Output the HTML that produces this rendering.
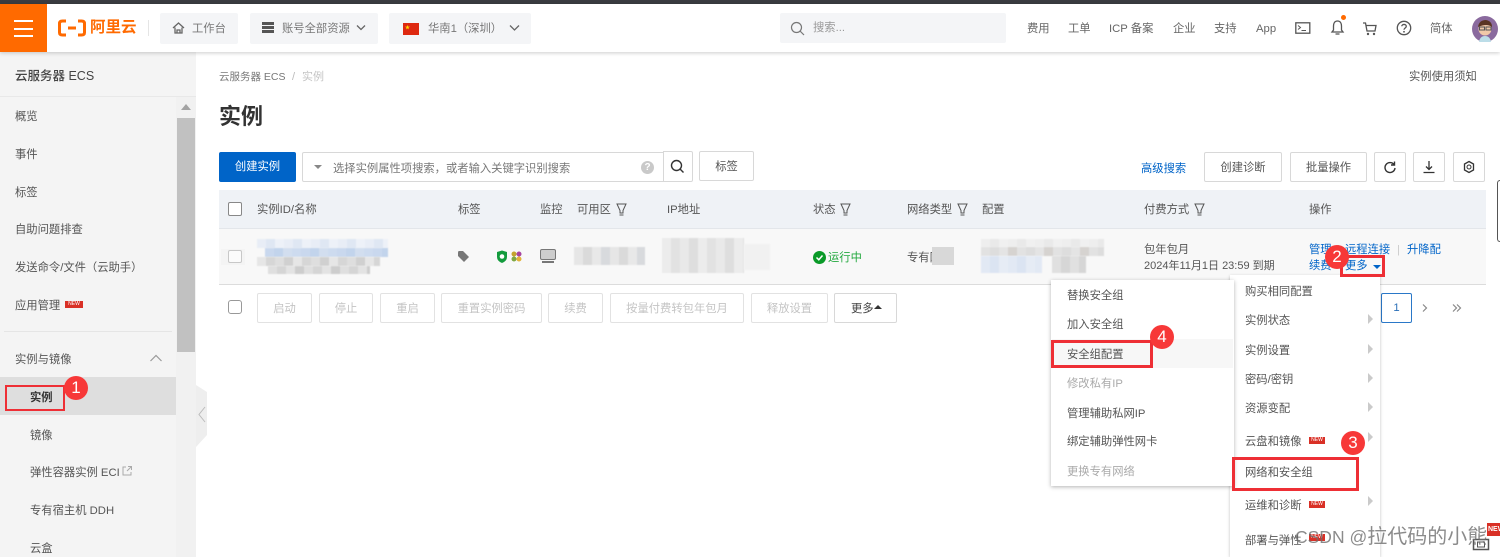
<!DOCTYPE html>
<html lang="zh"><head><meta charset="utf-8"><title>实例</title>
<style>
html,body{margin:0;padding:0;width:1500px;height:557px;overflow:hidden;background:#fff}
body{font-family:"Liberation Sans","Noto Sans CJK SC",sans-serif;font-size:11.300px;color:#555}
#w{position:absolute;left:0;top:0;width:1500px;height:557px;overflow:hidden;filter:blur(.3px)}
.t{position:absolute;line-height:16px;white-space:nowrap;height:16px;margin-top:1px}
.b{position:absolute;box-sizing:border-box}
.btn{position:absolute;box-sizing:border-box;border:1px solid #d8d8d8;border-radius:2px;background:#fff;text-align:center;color:#555;height:30px;line-height:30px;white-space:nowrap}
.dis{color:#c4c4c4;border-color:#e2e2e2;height:30px}
.blue{color:#0064c8}
.n{position:absolute;width:24px;height:24px;border-radius:50%;background:#f73838;color:#fff;font-size:17px;line-height:24px;text-align:center;z-index:9}
.red{position:absolute;box-sizing:border-box;border:3px solid #ee2f35;z-index:8}
.new{position:absolute;width:16px;height:7px;background:#d93026;color:#fff;font-size:5px;line-height:7px;text-align:center}
.arr{position:absolute;width:0;height:0;border-left:5px solid #cacaca;border-top:5px solid transparent;border-bottom:5px solid transparent}
.bl{position:absolute;filter:blur(.5px)}
svg{position:absolute}
</style></head><body><div id="w">
<!-- top bar -->
<div class="b" style="left:0;top:0;width:1500px;height:4px;background:#3a3b40"></div>
<div class="b" style="left:0;top:4px;width:1500px;height:48px;background:#fff;box-shadow:0 1px 4px rgba(0,0,0,.2);z-index:3"></div>
<div style="position:absolute;inset:0;z-index:4">
<div class="b" style="left:0;top:4px;width:47px;height:48px;background:#ff6a00"></div>
<div class="b" style="left:14px;top:20px;width:19px;height:2px;background:#fff"></div>
<div class="b" style="left:14px;top:28px;width:19px;height:2px;background:#fff"></div>
<div class="b" style="left:14px;top:35px;width:19px;height:2px;background:#fff"></div>
<svg style="left:58px;top:19px" width="28" height="18" viewBox="0 0 28 18"><path d="M8 2H4.500Q1.500 2 1.500 4.500V13.500Q1.500 16 4.500 16H8M20 2H23.500Q26.500 2 26.500 4.500V13.500Q26.500 16 23.500 16H20M10 9H18" fill="none" stroke="#ff6a00" stroke-width="3"/></svg>
<span class="t" style="left:90px;top:17px;font-size:15.500px;font-weight:700;color:#ff6a00;line-height:20px;height:20px">阿里云</span>
<div class="b" style="left:148px;top:20px;width:1px;height:16px;background:#e5e5e5"></div>
<div class="b" style="left:160px;top:13px;width:78px;height:31px;background:#f4f5f7;border-radius:2px"></div>
<svg style="left:172px;top:21px" width="13" height="14" viewBox="0 0 13 14"><path d="M1 7L6.500 2L12 7M3 6.500V12H10V6.500M5 12V9H8V12" fill="none" stroke="#666" stroke-width="1.300"/></svg>
<span class="t" style="left:192px;top:20px;color:#777">工作台</span>
<div class="b" style="left:250px;top:13px;width:128px;height:31px;background:#f4f5f7;border-radius:2px"></div>
<div class="b" style="left:262px;top:22px;width:12px;height:3px;background:#555"></div><div class="b" style="left:262px;top:26px;width:12px;height:3px;background:#555"></div><div class="b" style="left:262px;top:30px;width:12px;height:3px;background:#555"></div>
<span class="t" style="left:282px;top:20px;color:#777">账号全部资源</span>
<svg style="left:356px;top:24px" width="10" height="8" viewBox="0 0 10 8"><path d="M1 1.500L5 5.500L9 1.500" fill="none" stroke="#666" stroke-width="1.300"/></svg>
<div class="b" style="left:389px;top:13px;width:142px;height:31px;background:#f4f5f7;border-radius:2px"></div>
<div class="b" style="left:403px;top:23px;width:16px;height:12px;background:#de2910"></div>
<span class="t" style="left:405px;top:23px;font-size:5px;color:#ffde00;height:8px;line-height:8px">★</span>
<span class="t" style="left:428px;top:20px;color:#777">华南1（深圳）</span>
<svg style="left:509px;top:24px" width="11" height="8" viewBox="0 0 11 8"><path d="M1 1.500L5.500 6L10 1.500" fill="none" stroke="#666" stroke-width="1.300"/></svg>
<div class="b" style="left:780px;top:13px;width:226px;height:30px;background:#f4f5f7;border-radius:2px"></div>
<svg style="left:790px;top:21px" width="15" height="15" viewBox="0 0 15 15"><circle cx="6.500" cy="6.500" r="5" fill="none" stroke="#777" stroke-width="1.200"/><path d="M10 10L14 14" stroke="#777" stroke-width="1.200"/></svg>
<span class="t" style="left:813px;top:19px;color:#999">搜索...</span>
<span class="t" style="left:1027px;top:20px;color:#666">费用</span>
<span class="t" style="left:1068px;top:20px;color:#666">工单</span>
<span class="t" style="left:1109px;top:20px;color:#666">ICP 备案</span>
<span class="t" style="left:1173px;top:20px;color:#666">企业</span>
<span class="t" style="left:1214px;top:20px;color:#666">支持</span>
<span class="t" style="left:1256px;top:20px;color:#666">App</span>
<svg style="left:1295px;top:22px" width="16" height="12" viewBox="0 0 16 12"><rect x=".8" y=".8" width="14" height="10.400" fill="none" stroke="#555" stroke-width="1.300"/><path d="M3 3.500L5.500 5.500L3 7.500M6.500 8.500H11" fill="none" stroke="#555"/></svg>
<svg style="left:1330px;top:19px" width="15" height="17" viewBox="0 0 15 17"><path d="M7.500 2C4.500 2 3.500 4.500 3.500 7V11L2 13H13L11.500 11V7C11.500 4.500 10.500 2 7.500 2ZM5.500 15H9.500" fill="none" stroke="#555" stroke-width="1.300"/></svg>
<div class="b" style="left:1341px;top:15px;width:5px;height:5px;border-radius:50%;background:#ff6a00"></div>
<svg style="left:1362px;top:21px" width="16" height="15" viewBox="0 0 16 15"><path d="M1 2H3.500L5 10H13L14 4.500H4" fill="none" stroke="#555" stroke-width="1.300"/><circle cx="6" cy="13" r="1.200" fill="#555"/><circle cx="12" cy="13" r="1.200" fill="#555"/></svg>
<svg style="left:1396px;top:20px" width="16" height="16" viewBox="0 0 16 16"><circle cx="8" cy="8" r="6.700" fill="none" stroke="#555" stroke-width="1.300"/><path d="M5.800 6.300C5.800 3.800 10.300 3.800 10.300 6.300C10.300 8 8 8 8 9.800" fill="none" stroke="#555" stroke-width="1.300"/><circle cx="8" cy="11.800" r=".9" fill="#555"/></svg>
<span class="t" style="left:1430px;top:20px;color:#666">简体</span>
<svg style="left:1472px;top:16px" width="26" height="26" viewBox="0 0 26 26"><circle cx="13" cy="13" r="13" fill="#8a6a9e"/><circle cx="13" cy="13" r="6.500" fill="#f0c8a8"/><path d="M6 11Q7 4 14 4Q20 5 20 11Q15 7 6 11Z" fill="#5a3524"/><rect x="7.500" y="11" width="5" height="3" fill="none" stroke="#555"/><rect x="14" y="11" width="5" height="3" fill="none" stroke="#555"/><path d="M7 26Q8 20 13 20Q18 20 19 26Z" fill="#bcdde8"/></svg>
</div>

<!-- sidebar -->
<div class="b" style="left:0;top:52px;width:176px;height:505px;background:#f4f4f4"></div>
<div class="b" style="left:176px;top:97px;width:20px;height:460px;background:#f1f1f1"></div>
<div class="b" style="left:177px;top:118px;width:18px;height:234px;background:#c1c1c1"></div>
<div class="b" style="left:181px;top:104px;border-left:5px solid transparent;border-right:5px solid transparent;border-bottom:6px solid #a3a3a3"></div>
<div class="b" style="left:176px;top:52px;width:20px;height:45px;background:#f4f4f4"></div>
<span class="t" style="left:15px;top:67px;font-size:12.500px;color:#444;font-weight:500">云服务器 ECS</span>
<div class="b" style="left:0;top:96px;width:196px;height:1px;background:#e8e8e8"></div>
<span class="t" style="left:15px;top:108px">概览</span>
<span class="t" style="left:15px;top:146px">事件</span>
<span class="t" style="left:15px;top:184px">标签</span>
<span class="t" style="left:15px;top:221px">自助问题排查</span>
<span class="t" style="left:15px;top:259px">发送命令/文件（云助手）</span>
<span class="t" style="left:15px;top:297px">应用管理</span>
<div class="new" style="left:65px;top:301px;width:18px">NEW</div>
<div class="b" style="left:4px;top:331px;width:168px;height:1px;background:#e5e5e5"></div>
<span class="t" style="left:15px;top:351px">实例与镜像</span>
<svg style="left:149px;top:353px" width="14" height="10" viewBox="0 0 14 10"><path d="M1.500 8L7 2.500L12.500 8" fill="none" stroke="#999" stroke-width="1.200"/></svg>
<div class="b" style="left:0;top:377px;width:176px;height:38px;background:#dedede"></div>
<span class="t" style="left:30px;top:389px;color:#333;font-weight:700">实例</span>
<span class="t" style="left:30px;top:427px">镜像</span>
<span class="t" style="left:30px;top:464px">弹性容器实例 ECI</span>
<svg style="left:121px;top:465px" width="12" height="12" viewBox="0 0 12 12"><path d="M5 2H2V10H10V7M7 1.500H10.500V5M10.500 1.500L6 6" fill="none" stroke="#aaa"/></svg>
<span class="t" style="left:30px;top:502px">专有宿主机 DDH</span>
<span class="t" style="left:30px;top:540px">云盒</span>
<svg style="left:196px;top:385px" width="12" height="62" viewBox="0 0 12 62"><path d="M0 0L11 7V50L0 62Z" fill="#eee"/><path d="M9 22L3 29.500L9 37" fill="none" stroke="#bbb"/></svg>

<!-- header -->
<span class="t" style="left:219px;top:68px;font-size:10.500px;color:#777">云服务器 ECS</span>
<span class="t" style="left:292px;top:68px;font-size:11px;color:#bbb">/</span>
<span class="t" style="left:302px;top:68px;font-size:11px;color:#c4c4c4">实例</span>
<span class="t" style="left:1409px;top:68px;font-size:11.300px;color:#555">实例使用须知</span>
<span class="t" style="left:219px;top:100px;font-size:22px;font-weight:700;color:#333;line-height:32px;height:32px">实例</span>

<!-- toolbar -->
<div class="b" style="left:219px;top:152px;width:77px;height:30px;background:#0064c8;border-radius:2px;color:#fff;text-align:center;line-height:31px">创建实例</div>
<div class="b" style="left:302px;top:152px;width:362px;height:30px;background:#fff;border:1px solid #d8d8d8;border-radius:2px 0 0 2px"></div>
<div class="b" style="left:314px;top:165px;border-left:4px solid transparent;border-right:4px solid transparent;border-top:4px solid #888"></div>
<span class="t" style="left:333px;top:160px;color:#777">选择实例属性项搜索，或者输入关键字识别搜索</span>
<div class="b" style="left:641px;top:161px;width:13px;height:13px;border-radius:50%;background:#c9c9c9;color:#fff;font-size:10px;line-height:13px;text-align:center;font-weight:700">?</div>
<div class="b" style="left:663px;top:151px;width:30px;height:31px;background:#fff;border:1px solid #d8d8d8;border-radius:0 2px 2px 0"></div>
<svg style="left:670px;top:159px" width="15" height="15" viewBox="0 0 15 15"><circle cx="6.500" cy="6.500" r="5" fill="none" stroke="#333" stroke-width="1.400"/><path d="M10 10L13.500 13.500" stroke="#333" stroke-width="1.400"/></svg>
<div class="btn" style="left:699px;top:151px;width:55px">标签</div>
<span class="t blue" style="left:1141px;top:160px">高级搜索</span>
<div class="btn" style="left:1204px;top:152px;width:78px">创建诊断</div>
<div class="btn" style="left:1290px;top:152px;width:77px">批量操作</div>
<div class="btn" style="left:1374px;top:152px;width:32px"></div>
<svg style="left:1383px;top:160px" width="14" height="14" viewBox="0 0 14 14"><path d="M11 4.500A5 5 0 1 0 12 8M11.500 1.500V5H8" fill="none" stroke="#333" stroke-width="1.400"/></svg>
<div class="btn" style="left:1413px;top:152px;width:32px"></div>
<svg style="left:1422px;top:160px" width="14" height="14" viewBox="0 0 14 14"><path d="M7 1V9M4 6.500L7 9.500L10 6.500M1.500 12.500H12.500" fill="none" stroke="#333" stroke-width="1.300"/></svg>
<div class="btn" style="left:1453px;top:152px;width:32px"></div>
<svg style="left:1462px;top:160px" width="14" height="14" viewBox="0 0 14 14"><path d="M7 1.500L11.500 4V10L7 12.500L2.500 10V4Z" fill="none" stroke="#333" stroke-width="1.300"/><circle cx="7" cy="7" r="2" fill="none" stroke="#333"/></svg>

<!-- table head -->
<div class="b" style="left:219px;top:190px;width:1267px;height:39px;background:#eff2f6;border-bottom:1px solid #e3e6ea"></div>
<div class="b" style="left:228px;top:202px;width:14px;height:14px;background:#fff;border:1px solid #888;border-radius:2px"></div>
<span class="t" style="left:257px;top:201px">实例ID/名称</span>
<span class="t" style="left:458px;top:201px">标签</span>
<span class="t" style="left:540px;top:201px">监控</span>
<span class="t" style="left:577px;top:201px">可用区</span>
<span class="t" style="left:667px;top:201px">IP地址</span>
<span class="t" style="left:813px;top:201px">状态</span>
<span class="t" style="left:907px;top:201px">网络类型</span>
<span class="t" style="left:982px;top:201px">配置</span>
<span class="t" style="left:1144px;top:201px">付费方式</span>
<span class="t" style="left:1309px;top:201px">操作</span>
<svg style="left:616px;top:203px" width="11" height="13" viewBox="0 0 11 13"><path d="M1 1H10L7 7.500V10H4V7.500ZM3.500 12H7.500" fill="none" stroke="#555"/></svg>
<svg style="left:840px;top:203px" width="11" height="13" viewBox="0 0 11 13"><path d="M1 1H10L7 7.500V10H4V7.500ZM3.500 12H7.500" fill="none" stroke="#555"/></svg>
<svg style="left:957px;top:203px" width="11" height="13" viewBox="0 0 11 13"><path d="M1 1H10L7 7.500V10H4V7.500ZM3.500 12H7.500" fill="none" stroke="#555"/></svg>
<svg style="left:1194px;top:203px" width="11" height="13" viewBox="0 0 11 13"><path d="M1 1H10L7 7.500V10H4V7.500ZM3.500 12H7.500" fill="none" stroke="#555"/></svg>

<!-- table row -->
<div class="b" style="left:219px;top:229px;width:1267px;height:56px;background:#f8f8f8;border-bottom:1px solid #dcdcdc"></div>
<div class="b" style="left:221px;top:249px;width:24px;height:16px;background:#f4f4f4"></div>
<div class="b" style="left:228px;top:250px;width:14px;height:13px;background:#fbfbfb;border:1px solid #c8c8c8;border-radius:2px"></div>
<div class="bl" style="left:257px;top:239px;width:131px;height:9px;background:repeating-linear-gradient(90deg,#e8edf6 0 9px,#dfe7f3 9px 18px,#edf1f8 18px 27px)"></div>
<div class="bl" style="left:265px;top:248px;width:123px;height:9px;background:repeating-linear-gradient(90deg,#c9d8ee 0 9px,#c2d4ec 9px 18px,#d2deef 18px 27px,#cddbef 27px 36px)"></div>
<div class="bl" style="left:257px;top:257px;width:123px;height:9px;background:repeating-linear-gradient(90deg,#e6e6e6 0 9px,#d6d6d6 9px 18px,#dedede 18px 27px,#d0d0d0 27px 36px)"></div>
<div class="bl" style="left:268px;top:266px;width:102px;height:8px;background:repeating-linear-gradient(90deg,#dfdfdf 0 9px,#d5d5d5 9px 18px,#e3e3e3 18px 27px,#cdcdcd 27px 36px)"></div>
<svg style="left:457px;top:250px" width="13" height="13" viewBox="0 0 13 13"><path d="M1 2.500L1.500 1H6L12 7L7 12L1 6Z" fill="#777"/></svg>
<svg style="left:496px;top:250px" width="12" height="14" viewBox="0 0 12 14"><path d="M1 2L6 .5L11 2V7Q11 11 6 13Q1 11 1 7Z" fill="#139b3d"/><circle cx="6" cy="6.500" r="2.300" fill="#fff"/></svg>
<svg style="left:510px;top:250px" width="13" height="13" viewBox="0 0 13 13"><circle cx="4" cy="4" r="2.500" fill="#c4a32e"/><circle cx="9" cy="4" r="2.500" fill="#a7449f"/><circle cx="4" cy="9" r="2.500" fill="#7fa843"/><circle cx="9" cy="9" r="2.500" fill="#e3b23a"/></svg>
<div class="b" style="left:540px;top:249px;width:16px;height:11px;background:#cdcdcd;border:1px solid #777;border-radius:2px"></div>
<div class="b" style="left:542px;top:261px;width:12px;height:2px;background:#777"></div>
<div class="bl" style="left:574px;top:247px;width:71px;height:18px;background:repeating-linear-gradient(90deg,#e6e6e6 0 9px,#dadada 9px 18px,#e8e8e8 18px 27px,#d8dadd 27px 36px)"></div>
<div class="bl" style="left:662px;top:238px;width:82px;height:35px;background:repeating-linear-gradient(90deg,#ececec 0 9px,#e2e2e2 9px 18px,#e9e9e9 18px 27px,#dedede 27px 36px)"></div>
<div class="bl" style="left:744px;top:244px;width:26px;height:26px;background:#f1f1f1"></div>
<svg style="left:813px;top:251px" width="13" height="13" viewBox="0 0 13 13"><circle cx="6.500" cy="6.500" r="6.500" fill="#0a9a28"/><path d="M3.500 6.500L5.800 8.800L9.500 4.500" fill="none" stroke="#fff" stroke-width="1.500"/></svg>
<span class="t" style="left:828px;top:249px;color:#22a83e">运行中</span>
<span class="t" style="left:907px;top:249px">专有网</span>
<div class="b" style="left:932px;top:247px;width:22px;height:18px;background:#d8d8d8"></div>
<div class="bl" style="left:981px;top:239px;width:123px;height:8px;background:repeating-linear-gradient(90deg,#eeeeee 0 9px,#e9e9e9 9px 18px,#f0f0f0 18px 27px)"></div>
<div class="bl" style="left:981px;top:247px;width:123px;height:9px;background:repeating-linear-gradient(90deg,#e2e2e2 0 9px,#dddddd 9px 18px,#e4e4e4 18px 27px,#d6d3d0 27px 36px)"></div>
<div class="bl" style="left:981px;top:256px;width:61px;height:17px;background:repeating-linear-gradient(90deg,#e2e9f4 0 9px,#dbe4f2 9px 18px,#e6ecf5 18px 27px)"></div>
<div class="bl" style="left:1052px;top:256px;width:34px;height:17px;background:repeating-linear-gradient(90deg,#e0e0e0 0 9px,#d6d6d6 9px 18px)"></div>
<span class="t" style="left:1144px;top:241px">包年包月</span>
<span class="t" style="left:1144px;top:257px;font-size:11px">2024年11月1日 23:59 到期</span>
<span class="t blue" style="left:1309px;top:241px">管理</span>
<span class="t" style="left:1337px;top:241px;color:#bbb">|</span>
<span class="t blue" style="left:1345px;top:241px">远程连接</span>
<span class="t" style="left:1397px;top:241px;color:#ccc">|</span>
<span class="t blue" style="left:1407px;top:241px">升降配</span>
<span class="t blue" style="left:1309px;top:257px">续费</span>
<span class="t blue" style="left:1345px;top:257px">更多</span>
<div class="b" style="left:1373px;top:265px;border-left:4px solid transparent;border-right:4px solid transparent;border-top:4px solid #0064c8"></div>

<!-- bulk row -->
<div class="b" style="left:228px;top:300px;width:14px;height:14px;background:#fff;border:1px solid #999;border-radius:3px"></div>
<div class="btn dis" style="left:257px;top:293px;width:55px">启动</div>
<div class="btn dis" style="left:319px;top:293px;width:54px">停止</div>
<div class="btn dis" style="left:380px;top:293px;width:55px">重启</div>
<div class="btn dis" style="left:441px;top:293px;width:101px">重置实例密码</div>
<div class="btn dis" style="left:548px;top:293px;width:55px">续费</div>
<div class="btn dis" style="left:610px;top:293px;width:134px">按量付费转包年包月</div>
<div class="btn dis" style="left:751px;top:293px;width:77px">释放设置</div>
<div class="btn" style="left:834px;top:293px;width:63px;color:#444;text-align:left;padding-left:16px">更多</div>
<div class="b" style="left:874px;top:305px;border-left:4px solid transparent;border-right:4px solid transparent;border-bottom:4px solid #333"></div>
<div class="b" style="left:1381px;top:293px;width:31px;height:30px;border:1px solid #2a78c8;border-radius:2px;text-align:center;line-height:28px;color:#2a6fb8">1</div>
<svg style="left:1420px;top:303px" width="10" height="10" viewBox="0 0 10 10"><path d="M3 1.500L6.500 5L3 8.500" fill="none" stroke="#888" stroke-width="1.200"/></svg>
<svg style="left:1451px;top:303px" width="12" height="10" viewBox="0 0 12 10"><path d="M2 1.500L5.500 5L2 8.500M6 1.500L9.500 5L6 8.500" fill="none" stroke="#888" stroke-width="1.200"/></svg>

<!-- dropdown right -->
<div class="b" style="left:1230px;top:275px;width:150px;height:282px;background:#fff;box-shadow:0 1px 3px rgba(0,0,0,.25);z-index:5"></div>
<!-- dropdown left -->
<div class="b" style="left:1051px;top:280px;width:183px;height:206px;background:#fff;box-shadow:0 1px 4px rgba(0,0,0,.3);z-index:5"></div>
<div class="b" style="left:1052px;top:339px;width:181px;height:29px;background:#f7f7f7;z-index:5"></div>
<div style="position:absolute;inset:0;z-index:6">
<span class="t" style="left:1067px;top:287px">替换安全组</span>
<span class="t" style="left:1067px;top:316px">加入安全组</span>
<span class="t" style="left:1067px;top:346px">安全组配置</span>
<span class="t" style="left:1067px;top:375px;color:#aaa">修改私有IP</span>
<span class="t" style="left:1067px;top:405px">管理辅助私网IP</span>
<span class="t" style="left:1067px;top:433px">绑定辅助弹性网卡</span>
<span class="t" style="left:1067px;top:463px;color:#aaa">更换专有网络</span>
</div>
<div style="position:absolute;inset:0;z-index:6">
<span class="t" style="left:1245px;top:283px">购买相同配置</span>
<span class="t" style="left:1245px;top:312px">实例状态</span>
<span class="t" style="left:1245px;top:342px">实例设置</span>
<span class="t" style="left:1245px;top:371px">密码/密钥</span>
<span class="t" style="left:1245px;top:400px">资源变配</span>
<span class="t" style="left:1245px;top:433px">云盘和镜像</span>
<div class="new" style="left:1309px;top:437px">NEW</div>
<span class="t" style="left:1245px;top:464px">网络和安全组</span>
<span class="t" style="left:1245px;top:497px">运维和诊断</span>
<div class="new" style="left:1309px;top:501px">NEW</div>
<span class="t" style="left:1245px;top:532px">部署与弹性</span>
<div class="new" style="left:1309px;top:534px">NEW</div>
<div class="arr" style="left:1368px;top:314px"></div>
<div class="arr" style="left:1368px;top:344px"></div>
<div class="arr" style="left:1368px;top:373px"></div>
<div class="arr" style="left:1368px;top:402px"></div>
<div class="arr" style="left:1368px;top:432px"></div>
<div class="arr" style="left:1368px;top:496px"></div>
</div>

<!-- annotations -->
<div class="red" style="left:5px;top:385px;width:60px;height:26px;border-width:2px"></div>
<div class="n" style="left:64px;top:376px">1</div>
<div class="red" style="left:1340px;top:255px;width:45px;height:22px"></div>
<div class="n" style="left:1325px;top:245px">2</div>
<div class="red" style="left:1232px;top:457px;width:127px;height:34px"></div>
<div class="n" style="left:1341px;top:431px">3</div>
<div class="red" style="left:1051px;top:340px;width:102px;height:28px"></div>
<div class="n" style="left:1150px;top:325px">4</div>

<!-- bottom right -->
<div class="b" style="left:1463px;top:525px;width:37px;height:32px;background:#fff;border-radius:50% 0 0 0;z-index:7"></div>
<div class="b" style="left:1487px;top:523px;width:13px;height:13px;background:#d93026;color:#fff;font-size:7px;font-weight:700;line-height:13px;padding-left:1px;z-index:8;overflow:hidden">NEW</div>
<svg style="left:1472px;top:537px;z-index:8" width="18" height="16" viewBox="0 0 18 16"><rect x="1.500" y="2.500" width="15" height="10" fill="none" stroke="#555" stroke-width="1.500"/><rect x="5.500" y="5" width="7" height="5" fill="none" stroke="#555"/></svg>
<span class="t" style="left:1295px;top:522px;font-size:17.500px;line-height:28px;height:28px;color:rgba(110,110,110,.8);z-index:9">CSDN @<span style="font-size:20px">拉代码的小熊</span></span>
<div class="b" style="left:1497px;top:180px;width:3px;height:62px;border:1px solid #555;border-right:0;border-radius:3px 0 0 3px"></div>
</div></body></html>
